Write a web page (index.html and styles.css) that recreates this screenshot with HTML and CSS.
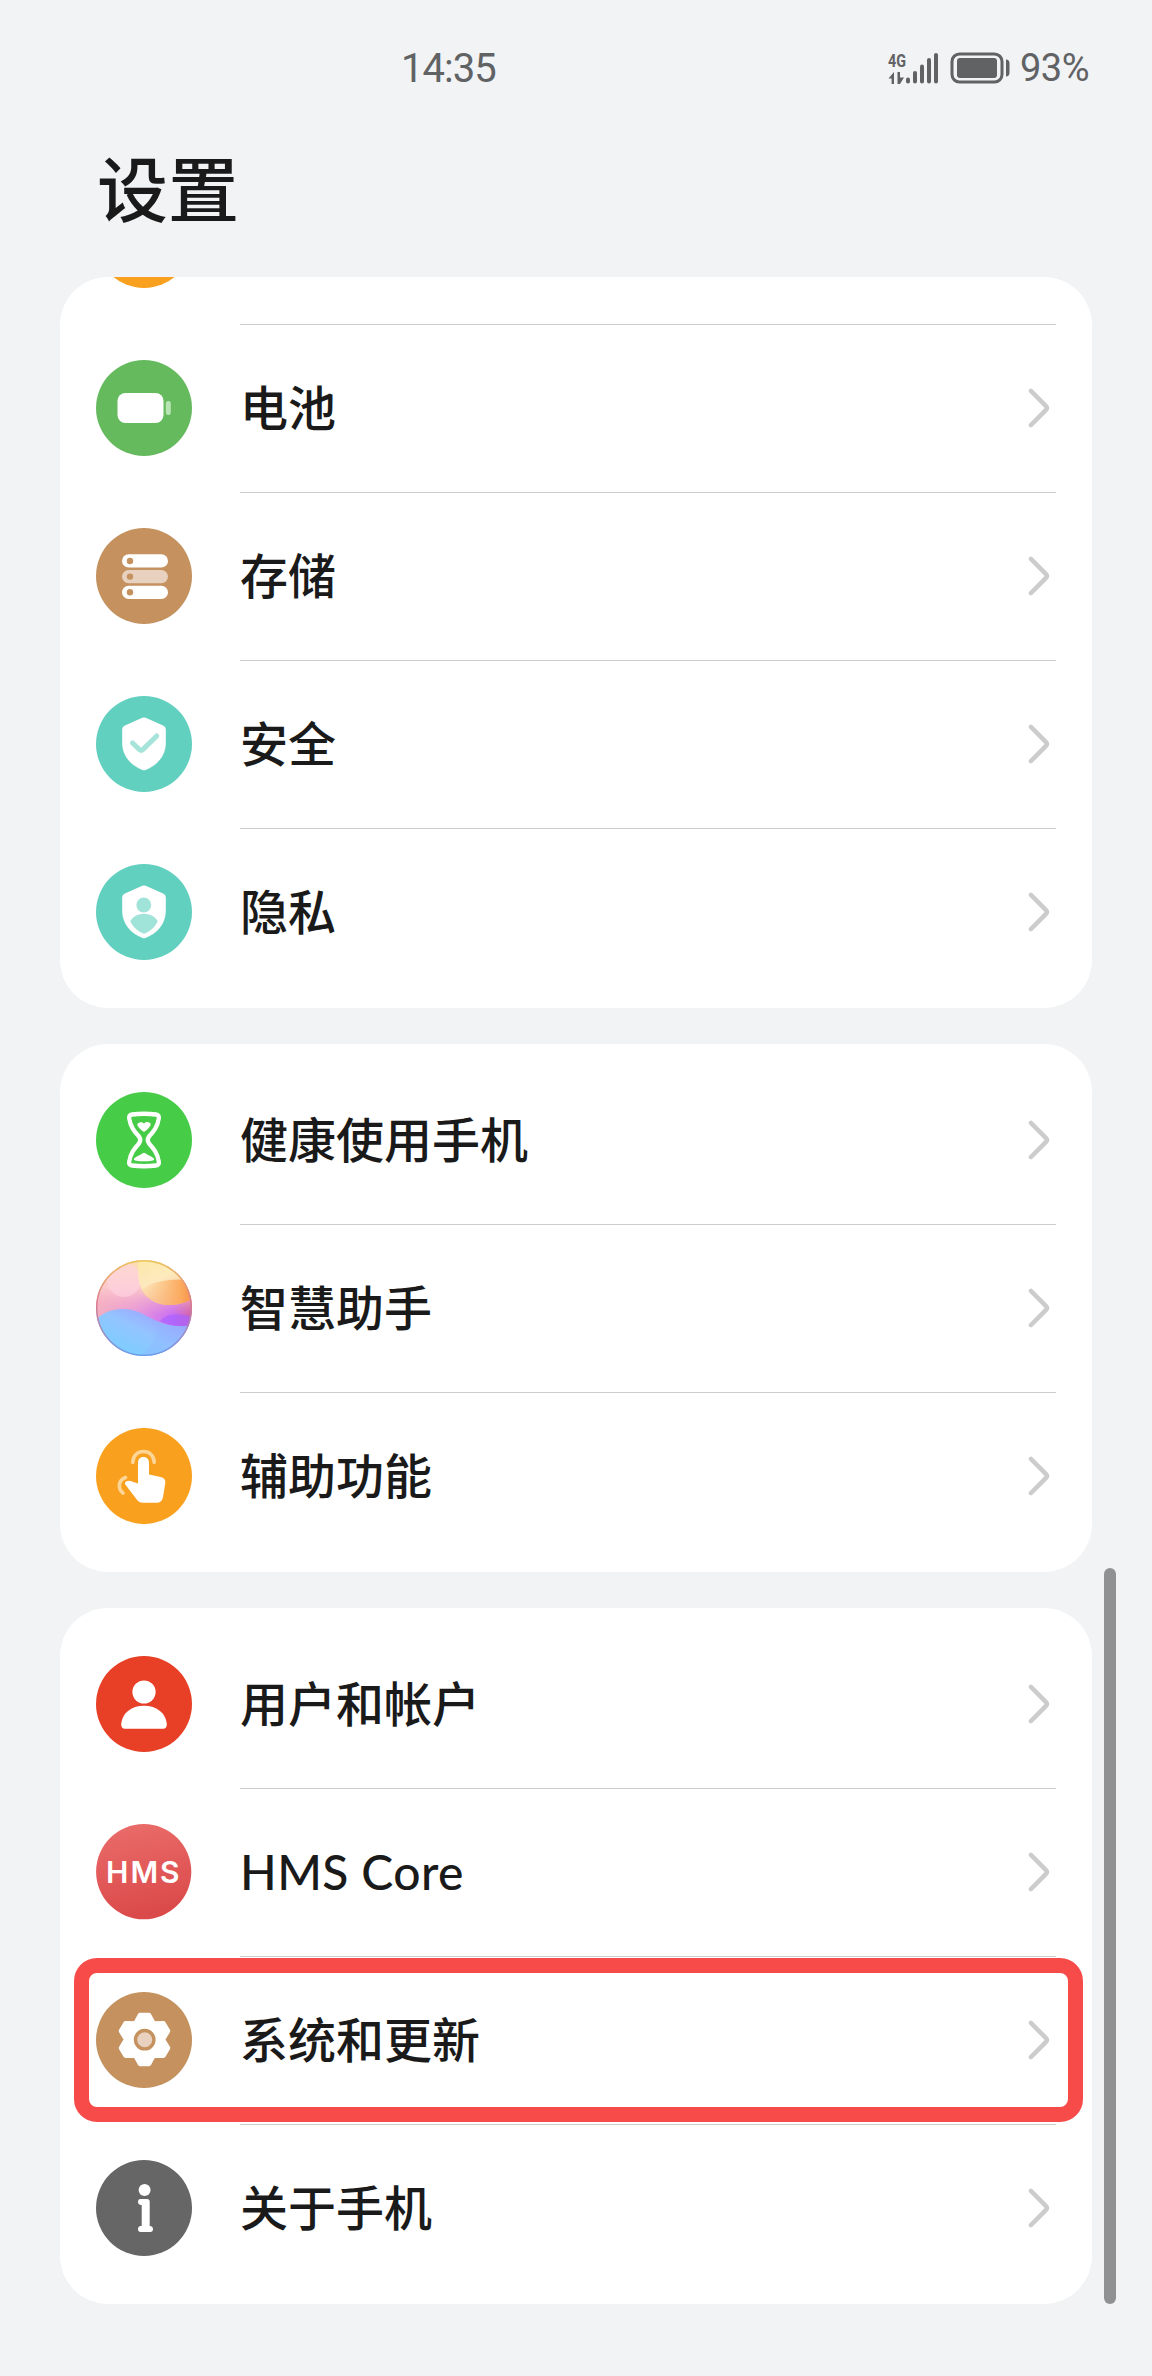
FILE: index.html
```html
<!DOCTYPE html>
<html lang="zh-CN">
<head>
  <meta charset="UTF-8" />
  <meta name="viewport" content="width=device-width, initial-scale=1.0"/>
  <title>设置</title>
  <link rel="stylesheet" href="styles.css">
</head>
<body>

  <!-- Shared chevron -->
  <svg class="defs" width="0" height="0">
    <symbol id="chevron" viewBox="0 0 24 42">
      <path d="M4 4 L19 19.2 Q20.8 21 19 22.8 L4 38" fill="none" stroke="#cccccc" stroke-width="4.6" stroke-linecap="round"/>
    </symbol>
  </svg>

  <!-- Status bar -->
  <header class="status-bar">
    <span class="time">14:35</span>
    <div class="status-right">
      <svg class="signal" width="56" height="42" viewBox="-4 -4 56 42">
        <path d="M6 21 V33 H3.6 V27.5 H0.5 Z" fill="#616264"/>
        <path d="M9.5 21 H12 V26.5 H16 L12 33 H9.5 Z" fill="#616264"/>
        <text class="net" x="0" y="15.5" textLength="18" lengthAdjust="spacingAndGlyphs">4G</text>
        <g fill="#616264">
          <rect x="18" y="26.5" width="4" height="6" rx="2"/>
          <rect x="25" y="20" width="4" height="12.5" rx="2"/>
          <rect x="32" y="13.5" width="4" height="19" rx="2"/>
          <rect x="39" y="7" width="4" height="25.5" rx="2"/>
          <rect x="46" y="2" width="4" height="30.5" rx="2"/>
        </g>
      </svg>
      <svg class="battery" width="62" height="34" viewBox="0 0 62 34">
        <rect x="2" y="2.9" width="50" height="28.2" rx="7.5" fill="none" stroke="#616264" stroke-width="3"/>
        <rect x="7" y="7" width="40" height="20" rx="3" fill="#616264"/>
        <path d="M56 8.5 Q59.5 8.5 59.5 12.5 V21.5 Q59.5 25.5 56 25.5 Z" fill="#616264"/>
      </svg>
      <span class="percent">93%</span>
    </div>
  </header>

  <h1>设置</h1>

  <main>
    <section class="card card-scrolled">
      <div class="row">
        <svg class="icon" viewBox="0 0 96 96"><circle cx="48" cy="48" r="48" fill="#f9a11f"/></svg>
        <div class="row-body"></div>
      </div>
      <div class="row">
        <svg class="icon" viewBox="0 0 96 96">
          <circle cx="48" cy="48" r="48" fill="#65ba5e"/>
          <rect x="21.5" y="33" width="46" height="30" rx="8" fill="#fff"/>
          <rect x="69.8" y="41" width="5" height="14" rx="2.3" fill="#b8e4b4"/>
        </svg>
        <div class="row-body"><span>电池</span><svg class="arrow"><use href="#chevron"/></svg></div>
      </div>
      <div class="row">
        <svg class="icon" viewBox="0 0 96 96">
          <circle cx="48" cy="48" r="48" fill="#c4915f"/>
          <rect x="26" y="26.3" width="46" height="13.2" rx="6.6" fill="#fff"/>
          <rect x="26" y="42" width="46" height="13.2" rx="6.6" fill="#e8d1bf"/>
          <rect x="26" y="57.7" width="46" height="13.2" rx="6.6" fill="#fff"/>
          <g fill="#c4915f">
            <circle cx="34" cy="33" r="3.2"/>
            <circle cx="34" cy="48.6" r="3.2"/>
            <circle cx="34" cy="64.3" r="3.2"/>
          </g>
        </svg>
        <div class="row-body"><span>存储</span><svg class="arrow"><use href="#chevron"/></svg></div>
      </div>
      <div class="row">
        <svg class="icon" viewBox="0 0 96 96">
          <circle cx="48" cy="48" r="48" fill="#62d0bf"/>
          <path d="M46.3 21.8 Q48 21 49.7 21.8 L67.6 29.8 Q69.8 31 69.8 33.2 V47 C69.8 60 61 69.5 49.5 74 Q48 74.6 46.5 74 C35 69.5 26.2 60 26.2 47 V33.2 Q26.2 31 28.4 29.8 Z" fill="#fff"/>
          <path d="M36.5 47 L43.5 53.6 Q45.2 55 46.8 53.6 L60.7 40" fill="none" stroke="#a6e3d9" stroke-width="5" stroke-linecap="round"/>
        </svg>
        <div class="row-body"><span>安全</span><svg class="arrow"><use href="#chevron"/></svg></div>
      </div>
      <div class="row">
        <svg class="icon" viewBox="0 0 96 96">
          <circle cx="48" cy="48" r="48" fill="#62d0bf"/>
          <path d="M46.3 21.8 Q48 21 49.7 21.8 L67.6 29.8 Q69.8 31 69.8 33.2 V47 C69.8 60 61 69.5 49.5 74 Q48 74.6 46.5 74 C35 69.5 26.2 60 26.2 47 V33.2 Q26.2 31 28.4 29.8 Z" fill="#fff"/>
          <circle cx="47.8" cy="41" r="7.4" fill="#a0e3d8"/>
          <path d="M34.6 56.5 C38 52 41.5 50 48 50 C54.5 50 58 52 61.4 56.5 C62 57.5 61 58.5 60.5 59.5 C57.5 64.5 53.5 67.5 49.5 69.3 Q48 70 46.5 69.3 C42.5 67.5 38.5 64.5 35.5 59.5 C35 58.5 34 57.5 34.6 56.5 Z" fill="#a0e3d8"/>
        </svg>
        <div class="row-body"><span>隐私</span><svg class="arrow"><use href="#chevron"/></svg></div>
      </div>
    </section>

    <section class="card">
      <div class="row">
        <svg class="icon" viewBox="0 0 96 96">
          <circle cx="48" cy="48" r="48" fill="#47cc47"/>
          <path d="M36 22.5 Q48 21 60 22.5 Q63.4 23 62.8 26.5 C61.5 35 57.5 39.5 53 44.5 Q50.5 48 53 51.5 C57.5 56.5 61.5 61 62.8 69.5 Q63.4 73 60 73.5 Q48 75 36 73.5 Q32.6 73 33.2 69.5 C34.5 61 38.5 56.5 43 51.5 Q45.5 48 43 44.5 C38.5 39.5 34.5 35 33.2 26.5 Q32.6 23 36 22.5 Z" fill="none" stroke="#fff" stroke-width="4.3"/>
          <path d="M48 40 C45.5 38.5 41.3 34.5 41.3 32.5 C41.3 30.5 45.5 29 48 31.5 C50.5 29 54.7 30 54.7 32.5 C54.7 34.5 50.5 38.5 48 40 Z" fill="#fff"/>
          <path d="M38 66.5 C41 64 45 63 46.5 61.3 Q48 60 49.5 61.3 C51 63 55 64 58 66.5 C59.5 69 53 69.3 48 69.3 C43 69.3 36.5 69 38 66.5 Z" fill="#fff"/>
        </svg>
        <div class="row-body"><span>健康使用手机</span><svg class="arrow"><use href="#chevron"/></svg></div>
      </div>
      <div class="row">
        <svg class="icon" viewBox="0 0 96 96">
          <defs>
            <clipPath id="orb"><circle cx="48" cy="48" r="48"/></clipPath>
            <linearGradient id="orb-base" x1="0" y1="0" x2="1" y2="0">
              <stop offset="0" stop-color="#f3b0bf"/>
              <stop offset=".4" stop-color="#e79bdb"/>
              <stop offset=".8" stop-color="#c86cf5"/>
              <stop offset="1" stop-color="#d0609f"/>
            </linearGradient>
            <linearGradient id="orb-pink" x1="0" y1="0" x2="0" y2="1">
              <stop offset="0" stop-color="#fbdfae"/>
              <stop offset=".5" stop-color="#fbc8cc"/>
              <stop offset="1" stop-color="#f6a6c0" stop-opacity="0"/>
            </linearGradient>
            <linearGradient id="orb-yellow" x1="0" y1="0" x2=".6" y2="1">
              <stop offset="0" stop-color="#fdeaa8"/>
              <stop offset=".5" stop-color="#fdeebc"/>
              <stop offset="1" stop-color="#fbb98a"/>
            </linearGradient>
            <linearGradient id="orb-orange" x1="0" y1="0" x2="1" y2="0">
              <stop offset="0" stop-color="#fccf94" stop-opacity=".2"/>
              <stop offset=".8" stop-color="#fba95c"/>
              <stop offset="1" stop-color="#f9914e"/>
            </linearGradient>
            <linearGradient id="orb-blue" x1="0" y1="1" x2="1" y2="0">
              <stop offset="0" stop-color="#6fd2ff"/>
              <stop offset=".5" stop-color="#93c5ff"/>
              <stop offset="1" stop-color="#a68bff"/>
            </linearGradient>
            <linearGradient id="orb-rim" x1="0" y1="0" x2="0" y2="1">
              <stop offset="0" stop-color="#ecc55c"/>
              <stop offset=".45" stop-color="#d9788c"/>
              <stop offset="1" stop-color="#6b9cec"/>
            </linearGradient>
          </defs>
          <g clip-path="url(#orb)">
            <rect width="96" height="96" fill="url(#orb-base)"/>
            <rect width="96" height="56" fill="url(#orb-pink)"/>
            <circle cx="28" cy="20" r="17" fill="#ffd3e2" opacity=".6"/>
            <path d="M42 0 H96 V39 C82 47 64 47 54 39 C44 32 41 20 42 0 Z" fill="url(#orb-yellow)" opacity=".85"/>
            <path d="M44 31 C54 22 72 18 96 20 V39 C82 47 64 47 54 39 Q48 36 44 31 Z" fill="url(#orb-orange)"/>
            <path d="M0 60 C10 48 30 46 45 53 C60 61 74 69 96 65 V96 H0 Z" fill="url(#orb-blue)"/>
            <path d="M64 61 C70 54 82 52 96 57 V65 C84 68 72 65 64 61 Z" fill="#a862ff" opacity=".7"/>
            <path d="M62 62 C76 67 86 67 96 65 V96 H44 C56 86 62 76 62 62 Z" fill="#8fb4ff" opacity=".35"/>
          </g>
          <circle cx="48" cy="48" r="47.3" fill="none" stroke="url(#orb-rim)" stroke-width="1.4"/>
        </svg>
        <div class="row-body"><span>智慧助手</span><svg class="arrow"><use href="#chevron"/></svg></div>
      </div>
      <div class="row">
        <svg class="icon" viewBox="0 0 96 96">
          <circle cx="48" cy="48" r="48" fill="#f9a11f"/>
          <path d="M36.8 34.5 C36.8 19.8 58.2 19.8 58.2 34.5" fill="none" stroke="#fdd597" stroke-width="3.6" stroke-linecap="round"/>
          <path d="M29.5 49.5 C22 52.5 21.5 60.5 27 65" fill="none" stroke="#fdd597" stroke-width="3.6" stroke-linecap="round"/>
          <path d="M42 34.5 C42 27.2 53 27.2 53 34.5 V46.5 L64.5 49 Q69.8 50.2 69.3 55 L67 69 Q66 74.8 60.5 74.8 H47 Q43.5 74.8 41.5 72.5 L29.5 56.8 Q28 54.5 30.5 53.2 Q32.5 52.3 34.5 53 L42 55.5 Z" fill="#fff"/>
        </svg>
        <div class="row-body"><span>辅助功能</span><svg class="arrow"><use href="#chevron"/></svg></div>
      </div>
    </section>

    <section class="card">
      <div class="row">
        <svg class="icon" viewBox="0 0 96 96">
          <circle cx="48" cy="48" r="48" fill="#e84026"/>
          <circle cx="48" cy="36" r="11.6" fill="#fff"/>
          <path d="M25.2 68 C26 57.5 35 49.8 48 49.8 C61 49.8 70 57.5 70.8 68 Q71 72.8 67 72.8 H29 Q25 72.8 25.2 68 Z" fill="#fff"/>
        </svg>
        <div class="row-body"><span>用户和帐户</span><svg class="arrow"><use href="#chevron"/></svg></div>
      </div>
      <div class="row">
        <svg class="icon" viewBox="0 0 96 96">
          <defs>
            <linearGradient id="hms-bg" x1="0" y1="0" x2=".2" y2="1">
              <stop offset="0" stop-color="#ea6e6b"/>
              <stop offset="1" stop-color="#db4a4b"/>
            </linearGradient>
          </defs>
          <circle cx="47.7" cy="47.7" r="47.6" fill="url(#hms-bg)"/>
          <text class="hms" y="59"><tspan x="10">H</tspan><tspan x="34.5">M</tspan><tspan x="64">S</tspan></text>
        </svg>
        <div class="row-body"><span class="latin">HMS Core</span><svg class="arrow"><use href="#chevron"/></svg></div>
      </div>
      <div class="row highlighted">
        <svg class="icon" viewBox="0 0 96 96">
          <circle cx="48" cy="48" r="48" fill="#c4915f"/>
          <polygon points="44,23 53,23 57.7,31.5 67.5,31.3 72,39 66.8,47.5 72,56 67.5,63.700 57.7,63.5 53,72 44,72 39.3,63.5 29.5,63.7 25,56 30.2,47.5 25,39 29.5,31.3 39.3,31.5" fill="#fff" stroke="#fff" stroke-width="4.5" stroke-linejoin="round"/>
          <circle cx="48.7" cy="47.7" r="9.2" fill="#e8d1bf" stroke="#c4915f" stroke-width="3.4"/>
        </svg>
        <div class="row-body"><span>系统和更新</span><svg class="arrow"><use href="#chevron"/></svg></div>
      </div>
      <div class="row">
        <svg class="icon" viewBox="0 0 96 96">
          <circle cx="48" cy="48" r="48" fill="#666666"/>
          <circle cx="48.6" cy="30" r="6" fill="#fff"/>
          <path d="M44.5 39 H51 Q53.7 39 53.7 41.7 V66 H54.5 Q57 66.3 57 69 Q57 72 54.3 72 H44.7 Q42 72 42 69 Q42 66.3 44.7 66 H45.7 V45 H44.5 Q42 44.7 42 42 Q42 39.2 44.5 39 Z" fill="#fff"/>
        </svg>
        <div class="row-body"><span>关于手机</span><svg class="arrow"><use href="#chevron"/></svg></div>
      </div>
    </section>
  </main>

  <div class="scrollbar"></div>

</body>
</html>
```

FILE: styles.css
```css
* { box-sizing: border-box; }
body { margin: 0; position: relative; width: 1152px; height: 2376px; background: #f1f3f5; color: #1a1a1a; font-family: "Noto Sans CJK SC", sans-serif; overflow: hidden; }
.defs { position: absolute; }

.status-bar { display: flex; justify-content: space-between; align-items: center; height: 136px; padding: 0 63px 0 401px; color: #616264; font-family: Roboto, sans-serif; }
.time { font-size: 40px; letter-spacing: -1px; }
.status-right { display: flex; align-items: center; }
.signal { margin-right: 10px; }
.battery { margin-right: 8px; }
.net { font: bold 19px Roboto, sans-serif; fill: #616264; }
.percent { font-size: 38px; letter-spacing: -0.5px; }

h1 { margin: 0; height: 141px; padding-left: 97px; font-size: 71px; font-weight: 500; line-height: 98px; }

main { display: flex; flex-direction: column; gap: 36px; padding: 0 60px; }
.card { display: flex; flex-direction: column; padding: 12px 36px; background: #fff; border-radius: 48px; overflow: hidden; }
.card-scrolled { height: 731px; padding-top: 0; justify-content: flex-end; }
.row { display: flex; flex-shrink: 0; align-items: center; height: 168px; position: relative; }
.icon { width: 96px; height: 96px; margin-right: 48px; }
.row-body { flex: 1; display: flex; justify-content: space-between; align-items: center; height: 168px; padding: 0 5px 1px 0; border-top: 1px solid #cccccc; font-size: 48px; font-weight: 500; line-height: 72px; }
.row-body span { padding-bottom: 6px; }
.card:not(.card-scrolled) .row:first-child .row-body { border-top-color: transparent; }
.arrow { width: 24px; height: 42px; }
.row-body .latin { padding: 0; font-family: Lato, sans-serif; letter-spacing: 0.4px; }
.hms { font: 600 30px Inter, sans-serif; fill: #fff; }

/* red frame around the update entry */
.highlighted::after { content: ""; box-sizing: border-box; position: absolute; left: -22.5px; right: -27px; top: 2px; height: 163.5px; border: 15px solid #f64b48; border-radius: 23px; }

.scrollbar { position: absolute; left: 1104px; top: 1568px; width: 12px; height: 736px; background: #909193; border-radius: 6px; }
```
